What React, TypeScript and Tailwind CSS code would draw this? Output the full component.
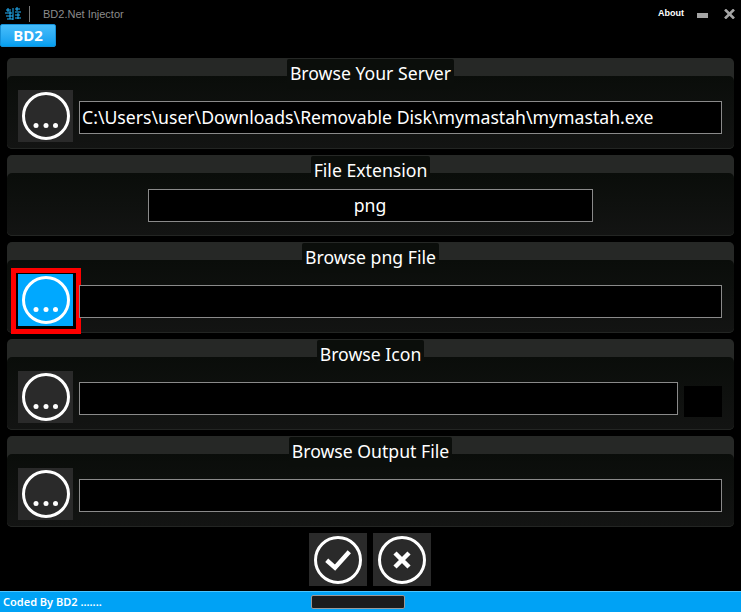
const Ring = ({ children }: { children: React.ReactNode }) => (
  <svg width="50" height="50" viewBox="0 0 50 50" fill="none">
    <circle cx="25" cy="25" r="22.5" stroke="white" strokeWidth="3" />
    {children}
  </svg>
);

function BrowseButton({ active }: { active?: boolean }) {
  return (
    <div
      className={`relative flex h-[52px] w-[55px] shrink-0 items-center justify-center ${active ? "bg-[#00a8ff]" : "bg-[#2a2a2a]"}`}
    >
      <Ring>
        <circle cx="15" cy="34.5" r="2.5" fill="white" />
        <circle cx="25" cy="34.5" r="2.5" fill="white" />
        <circle cx="34.500" cy="34.5" r="2.5" fill="white" />
      </Ring>
    </div>
  );
}

function Field({ value, center, className }: { value?: string; center?: boolean; className?: string }) {
  return (
    <div
      className={`relative mt-[2px] flex h-[33px] items-center border border-[#8a8a8a] bg-black px-[2px] text-[17.65px] whitespace-nowrap text-white ${center ? "justify-center" : ""} ${className ?? "flex-1"}`}
    >
      {value}
    </div>
  );
}

function Panel({ title, className, children }: { title: string; className: string; children: React.ReactNode }) {
  return (
    <section className={`flex flex-col rounded-[5px] bg-[#262826] ${className}`}>
      <div className="flex h-[18px] shrink-0 justify-center">
        <div className="relative z-10 mt-[1px] h-[30px] rounded-t-[2px] bg-[#0b0e0b] px-[3px] text-[17.65px] leading-[28px] whitespace-nowrap text-white">
          {title}
        </div>
      </div>
      <div className="relative flex-1 rounded-[5px] border-b border-[#232523] bg-gradient-to-b from-[#0a0d0a] to-[#131413] pt-[14px] pr-[12px] pl-[11px]">
        <div className="flex items-center gap-[6px]">{children}</div>
      </div>
    </section>
  );
}

export default function App() {
  return (
    <div className="flex h-[612px] w-[741px] flex-col overflow-hidden bg-black font-['Noto_Sans',sans-serif]">
      <header className="flex h-[24px] shrink-0 items-center pt-[4px] font-['Liberation_Sans',sans-serif]">
        <svg width="16" height="14" viewBox="0 0 16 14" className="ml-[5px]" fill="none" stroke="#22b4ff" strokeWidth="1">
          <path d="M1 3h5M0 6h7M1 9h7M2 12h6M3 1v4M5 4v8M8 1v12M10 2h5M10 5h6M10 8h5M10 11h6M12 0v4M13 6v6" />
        </svg>
        <div className="ml-[8px] h-[16px] w-px bg-[#777]" />
        <span className="ml-[13px] text-[11px] text-[#8c8c8c]">BD2.Net Injector</span>
        <span className="ml-auto text-[9px] font-bold text-white">About</span>
        <div className="mt-[3px] ml-[13px] h-[5px] w-[11px] bg-[#a5a5a5]" />
        <svg width="11" height="10" viewBox="0 0 11 10" className="mr-[6px] ml-[16px]">
          <path d="M1 .5l9 9M10 .5l-9 9" stroke="#a5a5a5" strokeWidth="2.6" />
        </svg>
      </header>

      <div className="flex h-[23px] w-[56px] shrink-0 items-center justify-center rounded-[2px] border border-[#1590d8] bg-gradient-to-b from-[#45bdfb] to-[#009fef] text-[15px] font-bold text-white">
        BD2
      </div>

      <main className="mt-[11px] flex flex-col gap-[6px] px-[7px]">
        <Panel title="Browse Your Server" className="h-[91px]">
          <BrowseButton />
          <Field value="C:\Users\user\Downloads\Removable Disk\mymastah\mymastah.exe" />
        </Panel>
        <Panel title="File Extension" className="h-[81px]">
          <Field value="png" center className="mx-auto w-[445px] flex-none" />
        </Panel>
        <Panel title="Browse png File" className="h-[91px]">
          {/* annotation drawn over the screenshot */}
          <div className="absolute top-[8px] left-[4px] h-[66px] w-[70px] border-[5px] border-[#ff0000] bg-black" />
          <BrowseButton active />
          <Field />
        </Panel>
        <Panel title="Browse Icon" className="h-[91px]">
          <BrowseButton />
          <Field />
          <div className="mt-[8px] h-[31px] w-[38px] shrink-0 bg-black" />
        </Panel>
        <Panel title="Browse Output File" className="h-[91px]">
          <BrowseButton />
          <Field />
        </Panel>
      </main>

      <div className="mt-[6px] flex justify-center gap-[6px] pr-[1px]">
        <div className="flex h-[53px] w-[58px] items-center justify-center bg-[#2a2a2a]">
          <Ring>
            <path d="M13.700 25.300l8.300 7.400 14.300-16" stroke="white" strokeWidth="4.500" />
          </Ring>
        </div>
        <div className="flex h-[53px] w-[58px] items-center justify-center bg-[#2a2a2a]">
          <Ring>
            <path d="M18 18l14 14M32 18l-14 14" stroke="white" strokeWidth="4.500" />
          </Ring>
        </div>
      </div>

      <footer className="relative mt-auto flex h-[21px] shrink-0 items-center border-t border-[#4cc4ff] bg-[#00a2f5] pl-[3px] text-[11px] font-semibold text-white">
        Coded By BD2 .......
        <div className="absolute top-[3px] left-[311px] h-[14px] w-[94px] rounded-[2px] border border-[#9a9a9a] bg-[#1c1c1c]" />
      </footer>
    </div>
  );
}
